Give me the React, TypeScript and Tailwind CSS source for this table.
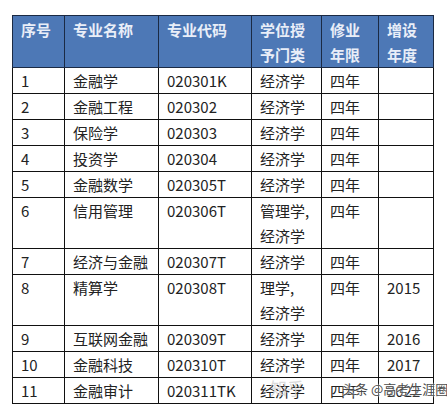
const cols = [52, 94, 93, 70, 57, 55];

const headerLines: string[][] = [["序号"], ["专业名称"], ["专业代码"], ["学位授", "予门类"], ["修业", "年限"], ["增设", "年度"]];

type Row = { h: number; cells: string[][] };

const rows: Row[] = [
  { h: 26, cells: [["1"], ["金融学"], ["020301K"], ["经济学"], ["四年"], [""]] },
  { h: 25, cells: [["2"], ["金融工程"], ["020302"], ["经济学"], ["四年"], [""]] },
  { h: 26, cells: [["3"], ["保险学"], ["020303"], ["经济学"], ["四年"], [""]] },
  { h: 26, cells: [["4"], ["投资学"], ["020304"], ["经济学"], ["四年"], [""]] },
  { h: 26, cells: [["5"], ["金融数学"], ["020305T"], ["经济学"], ["四年"], [""]] },
  { h: 50, cells: [["6"], ["信用管理"], ["020306T"], ["管理学,", "经济学"], ["四年"], [""]] },
  { h: 26, cells: [["7"], ["经济与金融"], ["020307T"], ["经济学"], ["四年"], [""]] },
  { h: 51, cells: [["8"], ["精算学"], ["020308T"], ["理学,", "经济学"], ["四年"], ["2015"]] },
  { h: 26, cells: [["9"], ["互联网金融"], ["020309T"], ["经济学"], ["四年"], ["2016"]] },
  { h: 25, cells: [["10"], ["金融科技"], ["020310T"], ["经济学"], ["四年"], ["2017"]] },
  { h: 26, cells: [["11"], ["金融审计"], ["020311TK"], ["经济学"], ["四年"], ["2022"]] },
];

const font = { fontFamily: '"Noto Sans CJK SC", "Noto Sans", sans-serif' };

export default function App() {
  return (
    <div className="relative h-[412px] w-[447px] bg-white" style={font}>
      <div className="pl-[12px] pt-[15px]">
        <table className="table-fixed border-collapse text-[15px] leading-[25px] text-[#222]">
          <colgroup>
            {cols.map((w, i) => (
              <col key={i} style={{ width: w }} />
            ))}
          </colgroup>
          <thead>
            <tr className="h-[51px] bg-[#4d78b6]">
              {headerLines.map((lines, i) => (
                <th
                  key={i}
                  className="border border-[#1b2a44] px-[8px] pt-[1px] text-left align-top font-bold text-[#e9eef8]"
                >
                  {lines.map((l, j) => (
                    <div key={j}>{l}</div>
                  ))}
                </th>
              ))}
            </tr>
          </thead>
          <tbody>
            {rows.map((r, i) => (
              <tr key={i} style={{ height: r.h }}>
                {r.cells.map((c, j) => (
                  <td key={j} className="whitespace-nowrap border border-[#111] px-[8px] align-top">
                    {c.map((l, k) => (
                      <div key={k}>{l}</div>
                    ))}
                  </td>
                ))}
              </tr>
            ))}
          </tbody>
        </table>
      </div>
      {/* watermark */}
      <span className="pointer-events-none absolute left-[270px] top-[378px] whitespace-nowrap text-[17px] leading-[20px] text-[#d2d2d2]/80">
        知乎
      </span>
      <span
        className="pointer-events-none absolute left-[342px] top-[380px] whitespace-nowrap text-[13px] leading-[18px] text-[#4a4a4a]"
        style={{ textShadow: "0 0 2px #fff, 0 0 2px #fff" }}
      >
        头条 @高考生涯圈
      </span>
    </div>
  );
}
